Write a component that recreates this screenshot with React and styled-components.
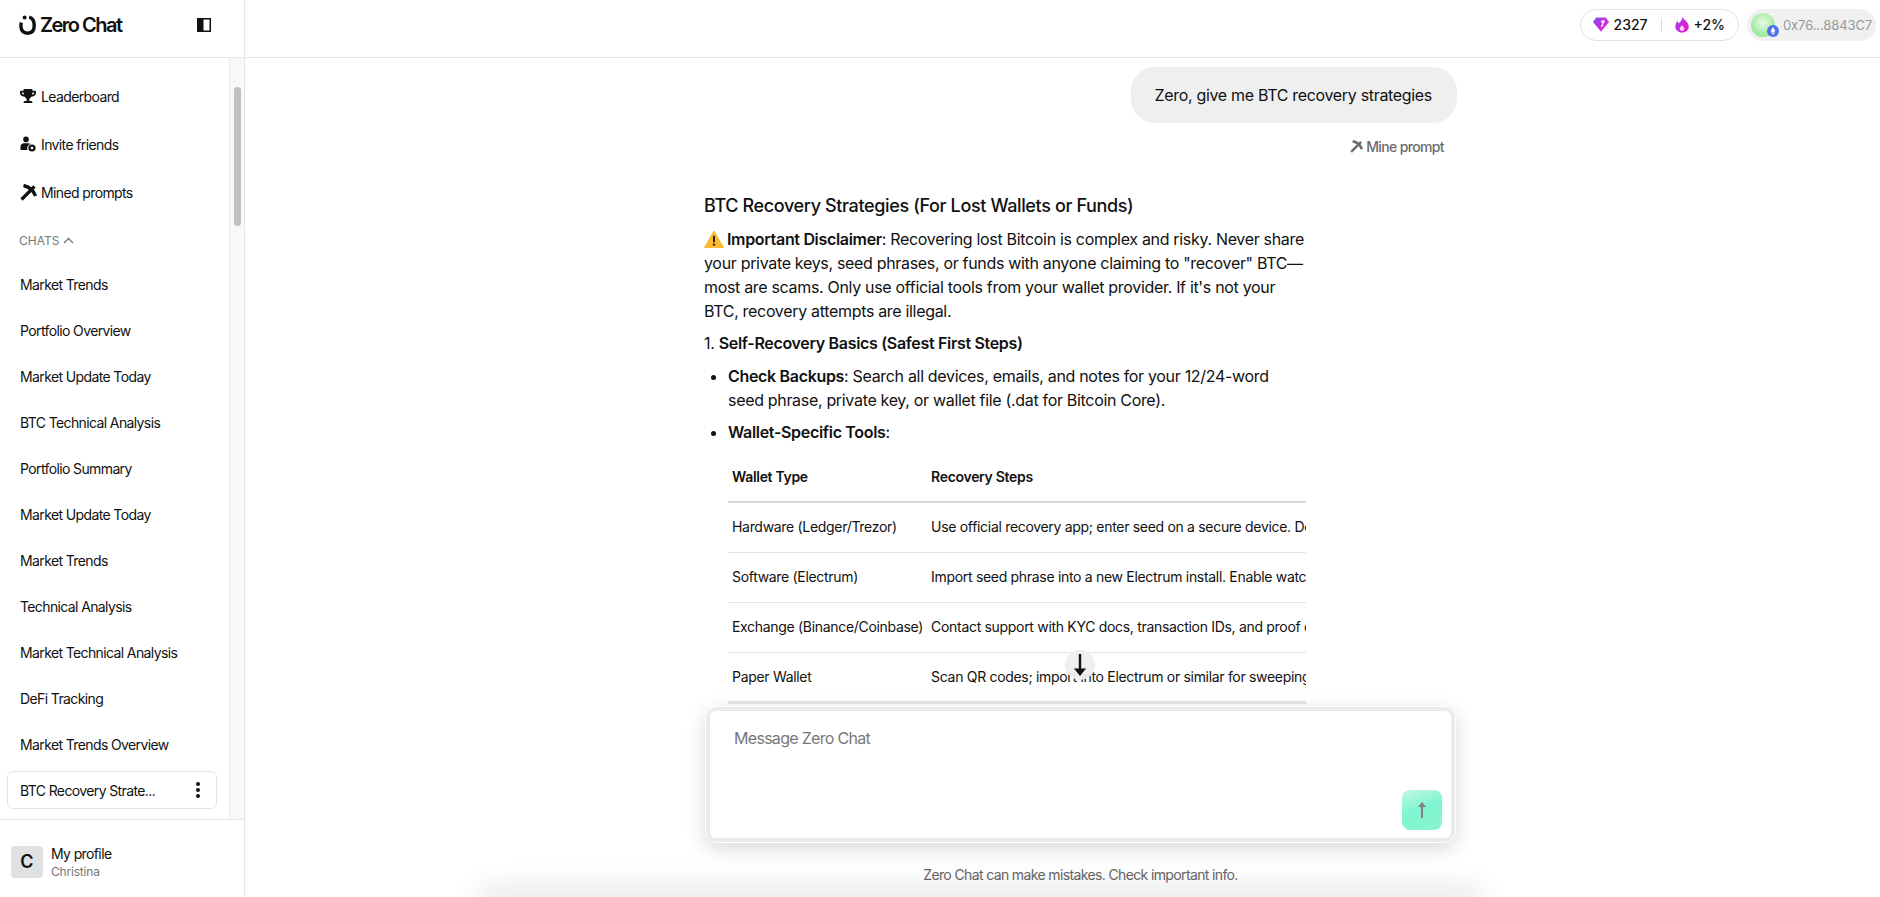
import React from "react";
import styled, { createGlobalStyle } from "styled-components";
import { FaTrophy, FaEthereum } from "react-icons/fa";

const navItems = ["Leaderboard", "Invite friends", "Mined prompts"];

const chats = [
  "Market Trends",
  "Portfolio Overview",
  "Market Update Today",
  "BTC Technical Analysis",
  "Portfolio Summary",
  "Market Update Today",
  "Market Trends",
  "Technical Analysis",
  "Market Technical Analysis",
  "DeFi Tracking",
  "Market Trends Overview",
];

const walletRows = [
  ["Hardware (Ledger/Trezor)", "Use official recovery app; enter seed on a secure device. Do not type your seed online."],
  ["Software (Electrum)", "Import seed phrase into a new Electrum install. Enable watch-only mode first."],
  ["Exchange (Binance/Coinbase)", "Contact support with KYC docs, transaction IDs, and proof of ownership."],
  ["Paper Wallet", "Scan QR codes; import into Electrum or similar for sweeping funds to a new wallet."],
];

const PickaxeIcon = ({ size = 17, color = "#111" }) => (
  <svg width={size} height={size} viewBox="0 0 17 17">
    <path d="M1.5 15.5 14.5 2.5" fill="none" stroke={color} strokeWidth="3.2" />
    <path d="M3.5 1.5Q12.5 3.5 15.5 12" fill="none" stroke={color} strokeWidth="3.4" />
  </svg>
);

const InviteIcon = () => (
  <svg width="16" height="16" viewBox="0 0 16 16">
    <circle cx="6" cy="3.4" r="2.8" fill="#111" />
    <path d="M0.5 14V10.5C0.5 8.5 2 7.2 4 7.2H8C9 7.2 9.8 7.5 10.4 8 8.4 8.7 7.2 10.5 7.2 12.3 7.2 12.9 7.4 13.5 7.6 14Z" fill="#111" />
    <circle cx="12" cy="12" r="3.6" fill="#111" />
    <circle cx="12" cy="12" r="1.3" fill="#fff" />
  </svg>
);

const LogoIcon = () => (
  <svg width="17" height="20" viewBox="0 0 17 20">
    <path d="M10.2 2.2C13.6 3 15.2 6 15.2 10.8 15.2 15.6 12.9 18.2 8.6 18.2 4.3 18.2 1.9 15.6 1.9 10.8 1.9 9.6 2 8.6 2.4 7.6" fill="none" stroke="#111" strokeWidth="3.4" />
    <circle cx="5.6" cy="2.6" r="2" fill="#111" />
  </svg>
);

const PanelIcon = () => (
  <svg width="14" height="14" viewBox="0 0 14 14">
    <rect x="0.75" y="0.75" width="12.5" height="12.5" fill="none" stroke="#111" strokeWidth="1.5" />
    <rect x="1" y="1" width="5.5" height="12" fill="#111" />
  </svg>
);

const GemIcon = () => (
  <svg width="16" height="15" viewBox="0 0 16 15">
    <defs>
      <linearGradient id="gem" x1="0" y1="0" x2="1" y2="0.7">
        <stop offset="0" stopColor="#7c4df0" />
        <stop offset="1" stopColor="#f01fd8" />
      </linearGradient>
    </defs>
    <path d="M3.2 0.5H12.8L16 5 8 14.8 0 5Z" fill="url(#gem)" />
    <path d="M8.5 3.6H12L9.2 10H7.9L9.6 5.4H8Z" fill="#fff" />
  </svg>
);

const FlameIcon = () => (
  <svg width="14" height="17" viewBox="0 0 14 17">
    <defs>
      <linearGradient id="flame" x1="0" y1="0.2" x2="1" y2="0.8">
        <stop offset="0" stopColor="#a040f0" />
        <stop offset="1" stopColor="#f018c8" />
      </linearGradient>
    </defs>
    <path d="M7.5 0.5C8 3 10.4 4 12.2 6.5 13.6 8.5 14 10 13.7 11.5 13.2 14.5 10.4 16.5 7 16.5 3.2 16.5 0.3 14 0.3 10.5 0.3 8 1.5 6.2 2.7 5L3.7 7.5C5.1 6 7.5 4 7.5 0.5Z" fill="url(#flame)" />
    <path d="M7 9C7.5 10.5 9.4 11 9.4 13 9.4 14.2 8.3 15 7 15 5.6 15 4.7 14 4.7 12.8 4.7 11 6.6 10.5 7 9Z" fill="#f7d0f5" />
  </svg>
);

const WarningIcon = () => (
  <svg width="20" height="18" viewBox="0 0 20 18">
    <path d="M10 1 19.5 17.5H0.5Z" fill="#fdb92e" stroke="#fdb92e" strokeLinejoin="round" />
    <rect x="9" y="5.5" width="2" height="7" rx="1" fill="#222" />
    <circle cx="10" cy="14.6" r="1.2" fill="#222" />
  </svg>
);

const ArrowDownIcon = () => (
  <svg width="14" height="24" viewBox="0 0 14 24">
    <path d="M7 1V18" stroke="#111" strokeWidth="2.4" />
    <path d="M1 15.5H13L7 23Z" fill="#111" />
  </svg>
);

const ArrowUpIcon = () => (
  <svg width="10" height="18" viewBox="0 0 10 18">
    <path d="M5 4V17" stroke="#808080" strokeWidth="2" />
    <path d="M1 6 5 1 9 6Z" fill="#808080" />
  </svg>
);

const App = () => (
  <>
    <GlobalStyle />
    <Page>
      <Sidebar>
        <BrandBar>
          <Brand>
            <LogoIcon />
            <span>Zero Chat</span>
          </Brand>
          <PanelIcon />
        </BrandBar>
        <SideBody>
          <SideList>
            {navItems.map((item, i) => (
              <NavItem key={item}>
                <NavIcon>
                  {i === 0 && <FaTrophy size={16} color="#111" />}
                  {i === 1 && <InviteIcon />}
                  {i === 2 && <PickaxeIcon />}
                </NavIcon>
                {item}
              </NavItem>
            ))}
            <ChatsLabel>
              CHATS
              <svg width="11" height="7" viewBox="0 0 11 7">
                <path d="M1 6 5.5 1.5 10 6" fill="none" stroke="#777" strokeWidth="1.4" />
              </svg>
            </ChatsLabel>
            {chats.map((chat, i) => (
              <ChatItem key={i}>{chat}</ChatItem>
            ))}
            <ActiveChat>
              <span>BTC Recovery Strate...</span>
              <Dots>
                <i />
                <i />
                <i />
              </Dots>
            </ActiveChat>
          </SideList>
          <ScrollTrack>
            <ScrollThumb />
          </ScrollTrack>
        </SideBody>
        <Profile>
          <Avatar>C</Avatar>
          <div>
            <ProfileName>My profile</ProfileName>
            <ProfileSub>Christina</ProfileSub>
          </div>
        </Profile>
      </Sidebar>

      <Main>
        <TopBar>
          <StatsPill>
            <Stat>
              <GemIcon />
              2327
            </Stat>
            <StatDivider />
            <Stat>
              <FlameIcon />
              +2%
            </Stat>
          </StatsPill>
          <WalletPill>
            <WalletOrb>
              <EthBadge>
                <FaEthereum size={8} color="#fff" />
              </EthBadge>
            </WalletOrb>
            0x76...8843C7
          </WalletPill>
        </TopBar>

        <Conversation>
          <Thread>
            <UserBubble>Zero, give me BTC recovery strategies</UserBubble>
            <MineRow>
              <PickaxeIcon size={13} color="#6b6b6b" />
              Mine prompt
            </MineRow>
            <Answer>
              <AnswerTitle>BTC Recovery Strategies (For Lost Wallets or Funds)</AnswerTitle>
              <Para>
                <WarningMark>
                  <WarningIcon />
                </WarningMark>
                <strong>Important Disclaimer</strong>: Recovering lost Bitcoin is complex and risky. Never share
                your private keys, seed phrases, or funds with anyone claiming to "recover" BTC—most are scams.
                Only use official tools from your wallet provider. If it's not your BTC, recovery attempts are
                illegal.
              </Para>
              <Para>
                1. <strong>Self-Recovery Basics (Safest First Steps)</strong>
              </Para>
              <Bullets>
                <li>
                  <strong>Check Backups</strong>: Search all devices, emails, and notes for your 12/24-word seed
                  phrase, private key, or wallet file (.dat for Bitcoin Core).
                </li>
                <li>
                  <strong>Wallet-Specific Tools</strong>:
                </li>
              </Bullets>
              <TableClip>
                <WalletTable>
                  <thead>
                    <tr>
                      <th>Wallet Type</th>
                      <th>Recovery Steps</th>
                    </tr>
                  </thead>
                  <tbody>
                    {walletRows.map(([type, steps]) => (
                      <tr key={type}>
                        <td>{type}</td>
                        <td>{steps}</td>
                      </tr>
                    ))}
                  </tbody>
                </WalletTable>
              </TableClip>
            </Answer>
          </Thread>
          <ScrollDown>
            <ArrowDownIcon />
          </ScrollDown>
        </Conversation>

        <ComposerArea>
          <Composer>
            <ComposerInner>
              <Placeholder>Message Zero Chat</Placeholder>
              <SendButton>
                <ArrowUpIcon />
              </SendButton>
            </ComposerInner>
          </Composer>
          <Disclaimer>Zero Chat can make mistakes. Check important info.</Disclaimer>
        </ComposerArea>
      </Main>
    </Page>
  </>
);

export default App;

const GlobalStyle = createGlobalStyle`
  html, body {
    margin: 0;
    height: 100%;
    overflow: hidden;
    background: #fff;
  }
  body {
    font-family: Inter, "Liberation Sans", sans-serif;
    color: #111;
  }
  * {
    box-sizing: border-box;
  }
`;

const Page = styled.div`
  display: flex;
  width: 1880px;
  height: 897px;
  overflow: hidden;
`;

const Sidebar = styled.aside`
  display: flex;
  flex-direction: column;
  flex: 0 0 245px;
  border-right: 1px solid #e5e5e5;
`;

const BrandBar = styled.div`
  display: flex;
  align-items: center;
  justify-content: space-between;
  flex: 0 0 58px;
  padding: 0 33px 7px 19px;
  border-bottom: 1px solid #e5e5e5;
`;

const Brand = styled.div`
  display: flex;
  align-items: center;
  gap: 4px;
  font-size: 20px;
  font-weight: 600;
  letter-spacing: -1.5px;
`;

const SideBody = styled.div`
  display: flex;
  flex: 1;
  min-height: 0;
`;

const SideList = styled.nav`
  flex: 1;
  min-width: 0;
  padding: 14px 0 0 7px;
  overflow: hidden;
`;

const NavItem = styled.div`
  display: flex;
  align-items: center;
  gap: 4px;
  height: 48px;
  padding-left: 12px;
  font-size: 14px;
  letter-spacing: -0.62px;
`;

const NavIcon = styled.span`
  display: flex;
  align-items: center;
  justify-content: center;
  width: 18px;
`;

const ChatsLabel = styled.div`
  display: flex;
  align-items: center;
  gap: 4px;
  height: 45px;
  padding: 3px 0 0 12px;
  font-size: 12px;
  color: #777;
`;

const ChatItem = styled.div`
  display: flex;
  align-items: center;
  height: 46px;
  padding-left: 13px;
  font-size: 14px;
  letter-spacing: -0.62px;
  white-space: nowrap;
`;

const ActiveChat = styled(ChatItem)`
  justify-content: space-between;
  width: 210px;
  height: 38px;
  margin-top: 4px;
  padding: 0 16px 0 12px;
  border: 1px solid #e5e5e5;
  border-radius: 6px;
`;

const Dots = styled.span`
  display: flex;
  flex-direction: column;
  gap: 2px;

  i {
    width: 4px;
    height: 4px;
    border-radius: 50%;
    background: #111;
  }
`;

const ScrollTrack = styled.div`
  flex: 0 0 15px;
  padding: 29px 3px 0 4px;
  background: #f8f8f8;
  border-left: 1px solid #ececec;
`;

const ScrollThumb = styled.div`
  height: 139px;
  border-radius: 4px;
  background: #c1c1c1;
`;

const Profile = styled.div`
  display: flex;
  align-items: center;
  gap: 8px;
  flex: 0 0 78px;
  padding: 6px 11px 0;
  border-top: 1px solid #e5e5e5;
`;

const Avatar = styled.div`
  display: flex;
  align-items: center;
  justify-content: center;
  width: 32px;
  height: 32px;
  border-radius: 4px;
  background: #e0e1e3;
  font-size: 18px;
  font-weight: 600;
`;

const ProfileName = styled.div`
  margin-top: 2px;
  font-size: 14px;
  line-height: 18px;
  letter-spacing: -0.62px;
`;

const ProfileSub = styled.div`
  font-size: 12px;
  line-height: 18px;
  letter-spacing: -0.2px;
  color: #777;
`;

const Main = styled.main`
  position: relative;
  display: flex;
  flex-direction: column;
  flex: 1;
  min-width: 0;
`;

const TopBar = styled.header`
  display: flex;
  align-items: center;
  justify-content: flex-end;
  gap: 8px;
  flex: 0 0 58px;
  padding: 0 4px 8px 0;
  border-bottom: 1px solid #e5e5e5;
`;

const StatsPill = styled.div`
  display: flex;
  align-items: center;
  gap: 13px;
  height: 32px;
  padding: 0 13px 0 12px;
  border: 1px solid #e2e2e2;
  border-radius: 16px;
`;

const Stat = styled.span`
  display: flex;
  align-items: center;
  gap: 5px;
  font-size: 14px;
  font-weight: 500;
`;

const StatDivider = styled.span`
  width: 1px;
  height: 14px;
  background: #ddd;
`;

const WalletPill = styled.div`
  display: flex;
  align-items: center;
  gap: 8px;
  width: 129px;
  height: 32px;
  padding-left: 4px;
  border-radius: 16px;
  background: #f0f0f0;
  font-size: 13px;
  letter-spacing: -0.1px;
  color: #999;
  white-space: nowrap;
`;

const WalletOrb = styled.span`
  position: relative;
  flex: 0 0 24px;
  height: 24px;
  border-radius: 50%;
  background: radial-gradient(circle at 50% 40%, #e8fae4, #a4eba4 62%, #8cdc90);
`;

const EthBadge = styled.span`
  position: absolute;
  right: -4px;
  bottom: 0;
  display: flex;
  align-items: center;
  justify-content: center;
  width: 12px;
  height: 12px;
  border-radius: 50%;
  background: #4f6fe8;
`;

const Conversation = styled.section`
  position: relative;
  flex: 1;
  min-height: 0;
  overflow: hidden;
`;

const Thread = styled.div`
  display: flex;
  flex-direction: column;
  width: 602px;
  margin-left: 459px;
  padding-top: 9px;
`;

const UserBubble = styled.div`
  align-self: flex-end;
  display: flex;
  align-items: center;
  flex: 0 0 56px;
  margin-right: -151px;
  padding: 0 25px 0 24px;
  border-radius: 24px;
  background: #efefef;
  font-size: 16px;
  letter-spacing: -0.32px;
  white-space: nowrap;
`;

const MineRow = styled.div`
  align-self: flex-end;
  display: flex;
  align-items: center;
  gap: 3px;
  height: 20px;
  margin: 13px -138px 1px 0;
  font-size: 14px;
  font-weight: 500;
  letter-spacing: -0.63px;
  color: #6b6b6b;
`;

const Answer = styled.article`
  margin-top: 37px;
  font-size: 16px;
  line-height: 24px;
  letter-spacing: -0.32px;
`;

const AnswerTitle = styled.h3`
  margin: 0 0 9px;
  font-size: 18px;
  font-weight: 500;
  line-height: 24px;
  letter-spacing: -0.37px;
`;

const Para = styled.p`
  margin: 0 0 8px;
  width: 602px;

  strong {
    font-weight: 600;
  }
`;

const WarningMark = styled.span`
  display: inline-block;
  width: 23px;
  height: 18px;
  line-height: 0;
  vertical-align: -3px;
`;

const Bullets = styled.ul`
  margin: 9px 0 0;
  padding: 0 0 0 24px;

  li {
    margin-bottom: 8px;
  }

  strong {
    font-weight: 600;
  }
`;

const TableClip = styled.div`
  width: 578px;
  margin: 8px 0 0 24px;
  overflow: hidden;
`;

const WalletTable = styled.table`
  border-collapse: collapse;
  white-space: nowrap;
  font-size: 14px;
  line-height: 20px;
  letter-spacing: -0.31px;

  th {
    height: 50px;
    padding: 0 4px;
    border-bottom: 2px solid #d8d8d8;
    font-weight: 600;
    text-align: left;
  }

  td {
    height: 50px;
    padding: 0 4px;
    border-bottom: 1px solid #e5e5e5;
  }

  tbody tr:last-child td {
    border-bottom-width: 3px;
  }
`;

const ScrollDown = styled.div`
  position: absolute;
  left: 820px;
  top: 592px;
  display: flex;
  align-items: flex-start;
  justify-content: center;
  width: 30px;
  height: 30px;
  padding-top: 3px;
  border-radius: 50%;
  background: rgba(238, 238, 238, 0.95);
`;

const ComposerArea = styled.div`
  position: relative;
  display: flex;
  flex-direction: column;
  align-items: center;
  flex: 0 0 191px;

  &::after {
    content: "";
    position: absolute;
    left: 235px;
    bottom: -20px;
    width: 1000px;
    height: 20px;
    box-shadow: 0 -8px 30px rgba(0, 0, 0, 0.12);
  }
`;

const Composer = styled.div`
  width: 751px;
  height: 137px;
  padding: 4px;
  margin-left: 36px;
  border: 1px solid #fff;
  border-radius: 12px;
  background: #ebebeb;
  box-shadow: 0 6px 20px rgba(0, 0, 0, 0.15);
`;

const ComposerInner = styled.div`
  position: relative;
  height: 100%;
  padding: 15px 24px;
  border-radius: 6px;
  background: #fff;
`;

const Placeholder = styled.div`
  font-size: 16px;
  line-height: 24px;
  letter-spacing: -0.7px;
  color: #77777a;
`;

const SendButton = styled.div`
  position: absolute;
  right: 9px;
  bottom: 8px;
  display: flex;
  align-items: center;
  justify-content: center;
  width: 40px;
  height: 40px;
  border-radius: 8px;
  background: linear-gradient(160deg, #c4f8e2, #7ff5d2 45%, #8af5cc);
`;

const Disclaimer = styled.div`
  margin: 22px 0 0 36px;
  font-size: 14px;
  line-height: 20px;
  letter-spacing: -0.63px;
  color: #666;
`;
